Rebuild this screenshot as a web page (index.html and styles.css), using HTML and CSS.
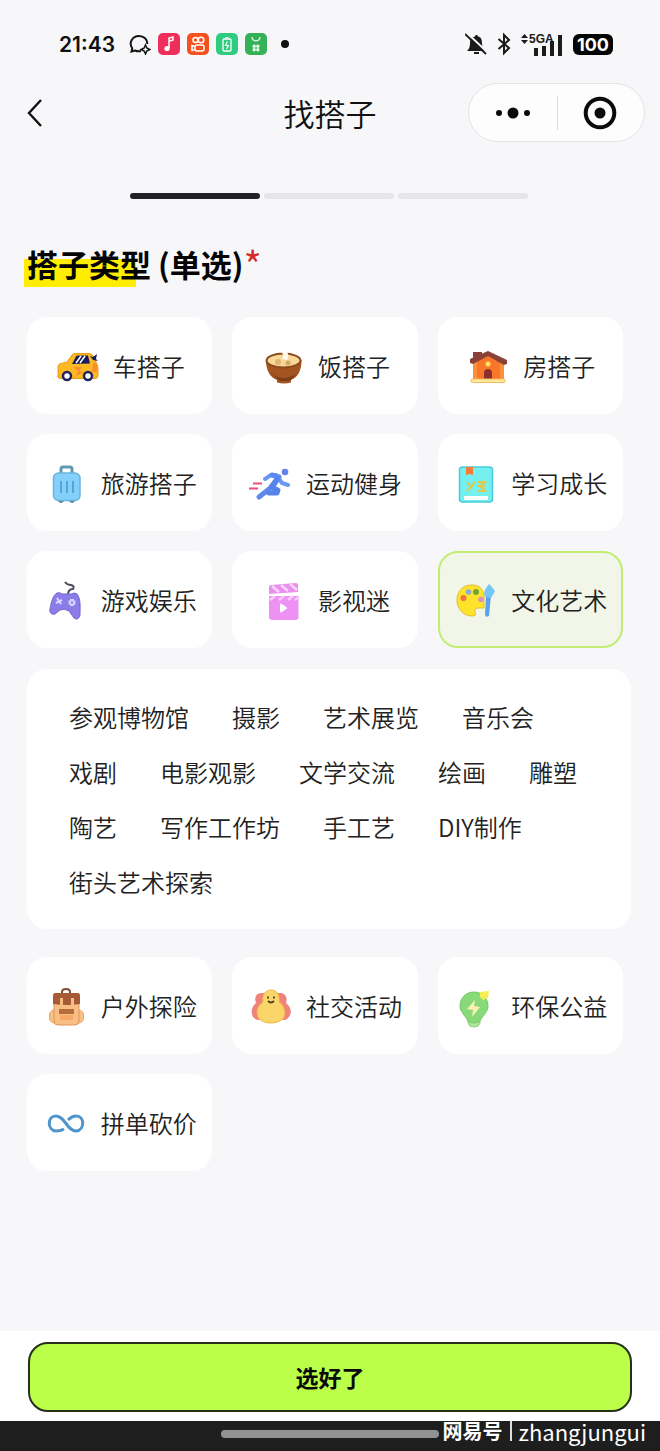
FILE: index.html
```html
<!DOCTYPE html>
<html lang="zh-CN">
<head>
    <meta charset="UTF-8" />
    <meta name="viewport" content="width=device-width, initial-scale=1.0"/>
    <title>找搭子</title>
    <link rel="stylesheet" href="styles.css">
</head>
<body>

<!-- Phone status bar -->
<div class="status-bar">
    <span class="clock">21:43</span>
    <div class="status-apps">
        <svg width="22" height="22" viewBox="0 0 22 22" fill="none" stroke="#151515" stroke-width="2">
            <path d="M12 18c-2 .6-4 .4-6-.5L2.500 18.500l.8-3.200C-.5 10 3 3 10 3c5 0 8.500 3.500 8.300 8"/>
            <path d="M16.500 12l1.300 3 3.200 1.500-3.200 1.500-1.300 3-1.300-3-3.200-1.500 3.200-1.500z" stroke-width="1.500"/>
        </svg>
        <svg width="22" height="22" viewBox="0 0 22 22">
            <rect width="22" height="22" rx="5" fill="#ee2f5b"/>
            <path d="M11 15V5l4-1v3l-3 1" fill="none" stroke="#fff" stroke-width="1.500"/>
            <circle cx="9" cy="15.500" r="2.600" fill="#fff"/>
        </svg>
        <svg width="22" height="22" viewBox="0 0 22 22">
            <rect width="22" height="22" rx="5" fill="#f4511e"/>
            <g fill="none" stroke="#fff" stroke-width="1.600">
                <circle cx="8.500" cy="7" r="2.500"/>
                <circle cx="14" cy="7" r="2.800"/>
                <rect x="8" y="12" width="9" height="6" rx="2"/>
                <path d="M8 13.500l-3-1v5l3-1"/>
            </g>
        </svg>
        <svg width="22" height="22" viewBox="0 0 22 22">
            <rect width="22" height="22" rx="5" fill="#2ecc7f"/>
            <rect x="7" y="6" width="8" height="12" rx="1" fill="none" stroke="#fff" stroke-width="1.300"/>
            <path d="M9.500 4.500h3M11.500 8.500l-2 4h3l-2 3.500" fill="none" stroke="#fff" stroke-width="1.200"/>
        </svg>
        <svg width="22" height="22" viewBox="0 0 22 22">
            <rect width="22" height="22" rx="5" fill="#35b257"/>
            <path d="M7 4c0 5 8 5 8 0" fill="none" stroke="#d9f5df" stroke-width="1.300"/>
            <g fill="#e6fbea">
                <circle cx="9.200" cy="13.200" r="1.700"/><circle cx="12.800" cy="13.200" r="1.700"/>
                <circle cx="9.200" cy="16.800" r="1.700"/><circle cx="12.800" cy="16.800" r="1.700"/>
            </g>
        </svg>
    </div>
    <span class="more-dot"></span>
    <div class="status-system">
        <svg width="22" height="24" viewBox="0 0 22 24">
            <path d="M2 19c2-2 3-4 3-8 0-4 2-6 5-6.500 0-2 3-2 3 0 3 .5 4 3 4 6.500 0 4 1 6 3 8z" fill="#1b1b1b"/>
            <path d="M9 21h5" stroke="#1b1b1b" stroke-width="2"/>
            <path d="M2 1l19 18" stroke="#f7f7f9" stroke-width="2"/>
            <path d="M0 2l21 20" stroke="#1b1b1b" stroke-width="1.800"/>
        </svg>
        <svg width="14" height="24" viewBox="0 0 14 24" fill="none" stroke="#1b1b1b" stroke-width="2">
            <path d="M1.500 7l10.500 9-5 5V3l5 5-10.500 9"/>
        </svg>
        <svg width="42" height="26" viewBox="0 0 42 26" fill="#1b1b1b">
            <path d="M0 7l3.500-4L7 7zM0 9h7l-3.500 4z"/>
            <text x="8" y="12" class="network">5GA</text>
            <path d="M13 17h4v8h-4zM21 15h4v10h-4zM29 10h4v15h-4zM37 4h4v21h-4z"/>
        </svg>
        <span class="battery">100</span>
    </div>
</div>

<header class="top-bar">
    <button class="back" type="button" aria-label="返回">
        <svg width="18" height="30" viewBox="0 0 18 30" fill="none" stroke="#111" stroke-width="2.400">
            <path d="M15 2L3 15l12 13"/>
        </svg>
    </button>
    <h1>找搭子</h1>
    <div class="capsule">
        <button type="button" aria-label="更多">
            <svg width="36" height="12" viewBox="0 0 36 12" fill="#0a0a0a">
                <circle cx="4" cy="6" r="3"/><circle cx="18" cy="6" r="5.500"/><circle cx="32" cy="6" r="3"/>
            </svg>
        </button>
        <button type="button" aria-label="关闭">
            <svg width="34" height="34" viewBox="0 0 34 34">
                <circle cx="17" cy="17" r="14.300" fill="none" stroke="#0a0a0a" stroke-width="4"/>
                <circle cx="17" cy="17" r="5.500" fill="#0a0a0a"/>
            </svg>
        </button>
    </div>
</header>

<main>
    <div class="steps">
        <span class="step active"></span>
        <span class="step"></span>
        <span class="step"></span>
    </div>

    <h2><span class="marker">搭子类型</span> (单选)<span class="required">*</span></h2>

    <div class="grid">
        <label class="card">
            <input type="radio" name="type">
            <svg class="icon" viewBox="0 0 44 44">
                <path d="M3 33V23q0-3 3-3.500l6-1.500 5-7q1-1.500 3-1.500h14q3 0 4.500 3l3.500 8q1 2 1 4v7q0 3-3 3H6q-3 0-3-2z" fill="#fdb924" stroke="#e79a16"/>
                <path d="M17 20l4-7.500q.5-1 2-1h10l2 8z" fill="#191c5c"/>
                <path d="M21 19l5-7M25 19l5-7" stroke="#fff" stroke-width="1.500"/>
                <path d="M35 12l3 1 4-3-1 5 2 2-5-1z" fill="#191c5c"/>
                <path d="M18 23h9l-3 4 4 2-7 3 2-5zM38 19h4v9h-5z" fill="#f7902b"/>
                <circle cx="12" cy="32" r="4" fill="#fff" stroke="#22235d" stroke-width="2.500"/>
                <circle cx="33" cy="32" r="4" fill="#fff" stroke="#22235d" stroke-width="2.500"/>
            </svg>
            车搭子
        </label>
        <label class="card">
            <input type="radio" name="type">
            <svg class="icon" viewBox="0 0 44 44">
                <path d="M6 16c0 11 4 17 11 20v2.500q7 2 14 0V36c7-3 10.500-9 10.500-20z" fill="#a45420"/>
                <path d="M12 30q12 8 24 0-5 7-8 7h-8z" fill="#7d3b16"/>
                <ellipse cx="23.500" cy="16.500" rx="17" ry="7" fill="#f8d79a" stroke="#8c4a1d" stroke-width="2"/>
                <circle cx="18" cy="18" r="3" fill="#ddb56e"/><circle cx="28" cy="19" r="2.500" fill="#d4aa63"/>
                <path d="M21 8q4 3 1 7l5 1q3-4 0-8z" fill="#fffaf0"/>
            </svg>
            饭搭子
        </label>
        <label class="card">
            <input type="radio" name="type">
            <svg class="icon" viewBox="0 0 44 44">
                <path d="M8 17l15-8 16 8v19H8z" fill="#f9772a"/>
                <path d="M8 18v18h4V17zM39 18v18h-4V17z" fill="#fa9138"/>
                <path d="M8 8h9v7H8z" fill="#8c4037"/>
                <path d="M5 19v-4l18-8 19 9v4l-3 1-16-9-15 8z" fill="#8a4138"/>
                <circle cx="23" cy="20" r="2.500" fill="#ffe260"/>
                <path d="M19 35v-6q0-4 4-4t4 4v6z" fill="#8c302d"/>
                <rect x="6" y="35" width="34" height="3.500" rx="1" fill="#ffe89a" stroke="#f1bc62"/>
            </svg>
            房搭子
        </label>
        <label class="card">
            <input type="radio" name="type">
            <svg class="icon" viewBox="0 0 44 44">
                <path d="M18 12V8q0-2 2-2h7q2 0 2 2v4" fill="none" stroke="#6199b3" stroke-width="3"/>
                <path d="M15 38h6v2q-3 4-6 0zM26 38h6v2q-3 4-6 0z" fill="#5c7f91"/>
                <rect x="10.500" y="12" width="26.500" height="27.500" rx="5" fill="#85d0fa" stroke="#67b4dd" stroke-width="1.500"/>
                <path d="M18 20v12M24 20v12M30 20v12" stroke="#4e9fd2" stroke-width="1.800"/>
            </svg>
            旅游搭子
        </label>
        <label class="card">
            <input type="radio" name="type">
            <svg class="icon" viewBox="0 0 44 44">
                <circle cx="37" cy="11" r="3.300" fill="#6382e9"/>
                <path d="M17 18l6-4h5l6 8 6 2" fill="none" stroke="#6a97f5" stroke-width="4" stroke-linecap="round" stroke-linejoin="round"/>
                <path d="M24 14l7 2-6 9-14 11" fill="none" stroke="#5d8af0" stroke-width="5" stroke-linecap="round" stroke-linejoin="round"/>
                <path d="M29 18l-6 8 7 3-1 3h-8" fill="none" stroke="#5583ea" stroke-width="5" stroke-linecap="round" stroke-linejoin="round"/>
                <path d="M5 22.500h9M1 27.500h9" stroke="#ef4d7b" stroke-width="2"/>
            </svg>
            运动健身
        </label>
        <label class="card">
            <input type="radio" name="type">
            <svg class="icon" viewBox="0 0 44 44">
                <rect x="6.500" y="6" width="33" height="35" rx="3" fill="#75f0ef" stroke="#49cddc" stroke-width="1.500"/>
                <path d="M13 6h7v8l-3.500-1-3.500 1z" fill="#f57c31"/>
                <path d="M14 21l4 5 4-5M14 30l6-6M25 21h7l-5 4 5 5h-7M24 25h8" fill="none" stroke="#dcc94e" stroke-width="2"/>
                <rect x="11" y="35" width="24" height="4" rx="1" fill="#fff"/>
            </svg>
            学习成长
        </label>
        <label class="card">
            <input type="radio" name="type">
            <svg class="icon" viewBox="0 0 44 44">
                <path d="M22 4q2 3 6 3 4 1 2 4-5 0-5 6" fill="none" stroke="#4f4c59" stroke-width="2"/>
                <path d="M14 15q3-1 5 1h10q2-2 5 0c4 5 3 13 3 21-1 4-3 5-6 3l-5-7q-5-3-9-1l-5 4c-3 1-6-1-5-5 1-6 3-14 7-16z" fill="#8b7ce9" stroke="#7467c9"/>
                <path d="M14 20l4 6M13 25l6-3" stroke="#ddd8ff" stroke-width="2"/>
                <path d="M29 21v7M25.500 24.500h7" stroke="#d7d1ff" stroke-width="4" stroke-dasharray="2.500 2"/>
            </svg>
            游戏娱乐
        </label>
        <label class="card">
            <input type="radio" name="type">
            <svg class="icon" viewBox="0 0 44 44">
                <path d="M9 9q0-2 2-2l25-2q2 0 2 2v7L9 16z" fill="#e990ee"/>
                <path d="M9 18h29.500v21q0 3-3 3H12q-3 0-3-3z" fill="#ed91f5"/>
                <path d="M12 8l7 6M21 7l7 6M30 6l7 6" stroke="#f9d5fb" stroke-width="2.500"/>
                <path d="M10 22l5-4M19 22l5-4M28 22l5-4M35 22l4-3" stroke="#f8cdfb" stroke-width="2.500"/>
                <path d="M9 17l29-1" stroke="#fff" stroke-width="1.500"/>
                <path d="M21 26.500l5 3.500-5 3.500z" fill="#fff" stroke="#fff" stroke-width="2" stroke-linejoin="round"/>
            </svg>
            影视迷
        </label>
        <label class="card">
            <input type="radio" name="type" checked>
            <svg class="icon" viewBox="0 0 44 44">
                <path d="M19 7C9 7 4 14 4 22s6 16 15 16q5 0 3-4-1-4 4-4h5V17C30 10 25 7 19 7z" fill="#fde42a" stroke="#e5bc31"/>
                <circle cx="10.500" cy="20" r="3" fill="#ef7144"/>
                <circle cx="15.500" cy="14" r="2.800" fill="#8caad4"/>
                <circle cx="23" cy="14" r="3" fill="#6fa535"/>
                <circle cx="28" cy="21.500" r="2.800" fill="#d992bf"/>
                <path d="M33 17h5l-2 21q-3 2-4-1z" fill="#5ba2ed"/>
                <path d="M36 6l2 2 4 5-4 7-6-1q-3-5 4-13z" fill="#75c5f7"/>
            </svg>
            文化艺术
        </label>
    </div>

    <!-- Sub types of the selected card -->
    <div class="tags">
        <button type="button">参观博物馆</button>
        <button type="button">摄影</button>
        <button type="button">艺术展览</button>
        <button type="button">音乐会</button>
        <button type="button">戏剧</button>
        <button type="button">电影观影</button>
        <button type="button">文学交流</button>
        <button type="button">绘画</button>
        <button type="button">雕塑</button>
        <button type="button">陶艺</button>
        <button type="button">写作工作坊</button>
        <button type="button">手工艺</button>
        <button type="button">DIY制作</button>
        <button type="button">街头艺术探索</button>
    </div>

    <div class="grid">
        <label class="card">
            <input type="radio" name="type">
            <svg class="icon" viewBox="0 0 44 44">
                <path d="M19 11V8q0-3 4-3t4 3v3" fill="none" stroke="#7f4b37" stroke-width="2"/>
                <rect x="6.500" y="26" width="34" height="13" rx="5" fill="#f9c082" stroke="#e9a465"/>
                <rect x="11" y="16" width="25" height="25" rx="4" fill="#f9be83" stroke="#dc9758"/>
                <path d="M12 9h23q2 0 2 3v8q-13 2-27 0v-8q0-3 2-3z" fill="#a65b36"/>
                <path d="M17 14h3v7h-3zM28 14h3v7h-3z" fill="#f5bd85"/>
                <path d="M16 25h15v5H16z" fill="#b66d3d"/>
                <path d="M17 31h13v5H17z" fill="#f8a866"/>
            </svg>
            户外探险
        </label>
        <label class="card">
            <input type="radio" name="type">
            <svg class="icon" viewBox="0 0 44 44">
                <path d="M14 9c-6 0-8 5-6 10-6 5-5 12-2 15 5 4 10 1 10 1h15s6 3 9-1c4-4 4-10-2-15 2-6-1-10-6-10z" fill="#ef827b"/>
                <path d="M23 6c-6 0-9 5-8 12-6 4-7 10-5 15 4 8 22 8 26 0 2-5 0-12-5-15 1-7-2-12-8-12z" fill="#fad56a" stroke="#efba51"/>
                <path d="M20 12.500v2M26 12.500v2M20 17q3 3 6 0" fill="none" stroke="#503c20" stroke-width="1.800"/>
            </svg>
            社交活动
        </label>
        <label class="card">
            <input type="radio" name="type">
            <svg class="icon" viewBox="0 0 44 44">
                <path d="M15 36h12v3q-1 4-6 4t-6-4z" fill="#b5e6a0" stroke="#88cd78"/>
                <path d="M21 8C13 8 7 14 7 22c0 6 5 9 8 15q6 4 12 0c3-6 8-9 8-15C35 14 29 8 21 8z" fill="#88d977" stroke="#76c869"/>
                <path d="M27 8l9-1-1 7-5 2-3-3z" fill="#f5ed52"/>
                <path d="M22 16l-8 9 6 1-1 7 8-10-6-1z" fill="#fff0b2"/>
            </svg>
            环保公益
        </label>
        <label class="card">
            <input type="radio" name="type">
            <svg class="icon" viewBox="0 0 44 44">
                <path d="M21 28c-3 2-5 2-8 2-9-1-9-15 0-15 9 0 11 15 20 15 9-1 9-15 0-15-4 0-6 2-8 4" fill="none" stroke="#4f95cc" stroke-width="3"/>
            </svg>
            拼单砍价
        </label>
    </div>
</main>

<footer>
    <button class="submit" type="button">选好了</button>
</footer>

<div class="nav-bar">
    <span class="home"></span>
    <div class="account"><b>网易号</b><span>zhangjungui</span></div>
</div>

</body>
</html>
```
FILE: styles.css
```css
* {
    box-sizing: border-box;
}
body {
    margin: 0;
    min-height: 100vh;
    display: flex;
    flex-direction: column;
    background: #f7f7f9;
    color: #222;
    font-family: "Noto Sans CJK SC", sans-serif;
    font-size: 24px;
    font-weight: 350;
}
button {
    padding: 0;
    border: none;
    background: none;
    color: inherit;
    font: inherit;
    cursor: pointer;
}
svg {
    display: block;
    flex: none;
}

/* status bar */
.status-bar {
    display: flex;
    align-items: center;
    height: 83px;
    padding: 5px 47px 0 59px;
    font-family: Inter, sans-serif;
}
.clock {
    color: #111;
    font-size: 21px;
    font-weight: 600;
}
.status-apps {
    display: flex;
    gap: 7px;
    margin-left: 14px;
}
.more-dot {
    width: 8px;
    height: 8px;
    margin-left: 14px;
    border-radius: 50%;
    background: #111;
}
.status-system {
    display: flex;
    align-items: center;
    gap: 10px;
    margin-left: auto;
}
.network {
    font: 700 12px "Liberation Sans Narrow", "Liberation Sans", sans-serif;
}
.battery {
    width: 40px;
    border-radius: 6px;
    background: #050505;
    color: #fff;
    font-size: 18px;
    font-weight: 700;
    line-height: 21px;
    text-align: center;
}

/* title row */
.top-bar {
    display: grid;
    grid-template-columns: 1fr auto 1fr;
    align-items: center;
    padding: 0 15px;
}
.top-bar h1 {
    margin: 0;
    color: #111;
    font-size: 31px;
    font-weight: 350;
    line-height: 40px;
}
.back {
    justify-self: start;
    padding: 0 11px;
}
.capsule {
    display: flex;
    justify-self: end;
    width: 177px;
    height: 59px;
    border: 1px solid #e4e4e6;
    border-radius: 30px;
    background: #fdfdfe;
}
.capsule button {
    position: relative;
    flex: 1;
    display: flex;
    align-items: center;
    justify-content: center;
}
.capsule button + button::before {
    content: "";
    position: absolute;
    left: 0;
    width: 1px;
    height: 34px;
    background: #dcdcde;
}

main {
    flex: 1;
    padding: 51px 29px 20px 27px;
}
.steps {
    display: grid;
    grid-template-columns: repeat(3, 1fr);
    gap: 4px;
    width: 66%;
    margin: 0 auto;
}
.step {
    height: 6px;
    border-radius: 3px;
    background: #e6e6e9;
}
.step.active {
    background: #212128;
}

h2 {
    margin: 44px 0 32px;
    color: #050505;
    font-size: 31px;
    font-weight: 700;
    line-height: 42px;
}
/* yellow stroke behind the first words */
.marker {
    position: relative;
    z-index: 0;
}
.marker::before {
    content: "";
    position: absolute;
    z-index: -1;
    left: -3px;
    right: 15px;
    bottom: -1px;
    height: 28px;
    background: #ffed00;
}
.required {
    color: #d42b2b;
    font-size: 40px;
    font-weight: 350;
    line-height: 20px;
    vertical-align: -4px;
}

/* type cards */
.grid {
    display: grid;
    grid-template-columns: repeat(3, 1fr);
    gap: 20px;
    padding-right: 8px;
}
.card {
    display: flex;
    align-items: center;
    justify-content: center;
    gap: 14px;
    height: 97px;
    border: 2px solid #fff;
    border-radius: 20px;
    background: #fff;
    white-space: nowrap;
    cursor: pointer;
}
.card input {
    position: absolute;
    opacity: 0;
    pointer-events: none;
}
.card:has(input:checked) {
    border-color: #c1ee72;
    background: #f1f6e9;
}
.icon {
    width: 44px;
    height: 44px;
}

.tags {
    display: flex;
    flex-wrap: wrap;
    column-gap: 43px;
    margin: 21px 0 28px;
    padding: 20px 27px 20px 42px;
    border-radius: 20px;
    background: #fff;
    line-height: 55px;
}

footer {
    padding: 11px 28px 9px;
    background: #fff;
}
.submit {
    display: block;
    width: 100%;
    height: 70px;
    border: 2px solid #26301a;
    border-radius: 20px;
    background: #bcff4a;
    color: #0a0a0a;
    font-size: 23px;
    font-weight: 700;
}

.nav-bar {
    position: relative;
    height: 30px;
    padding-top: 9px;
    background: #1e1e1e;
}
.home {
    display: block;
    width: 33%;
    height: 8px;
    margin: 0 auto;
    border-radius: 4px;
    background: #929292;
}
.account {
    position: absolute;
    top: 0;
    right: 14px;
    display: flex;
    align-items: center;
    color: #fff;
    font-size: 20px;
    line-height: 20px;
}
.account span {
    margin-left: 8px;
    padding-left: 6px;
    border-left: 2px solid #ddd;
    font-size: 22px;
    font-weight: 400;
}
```
